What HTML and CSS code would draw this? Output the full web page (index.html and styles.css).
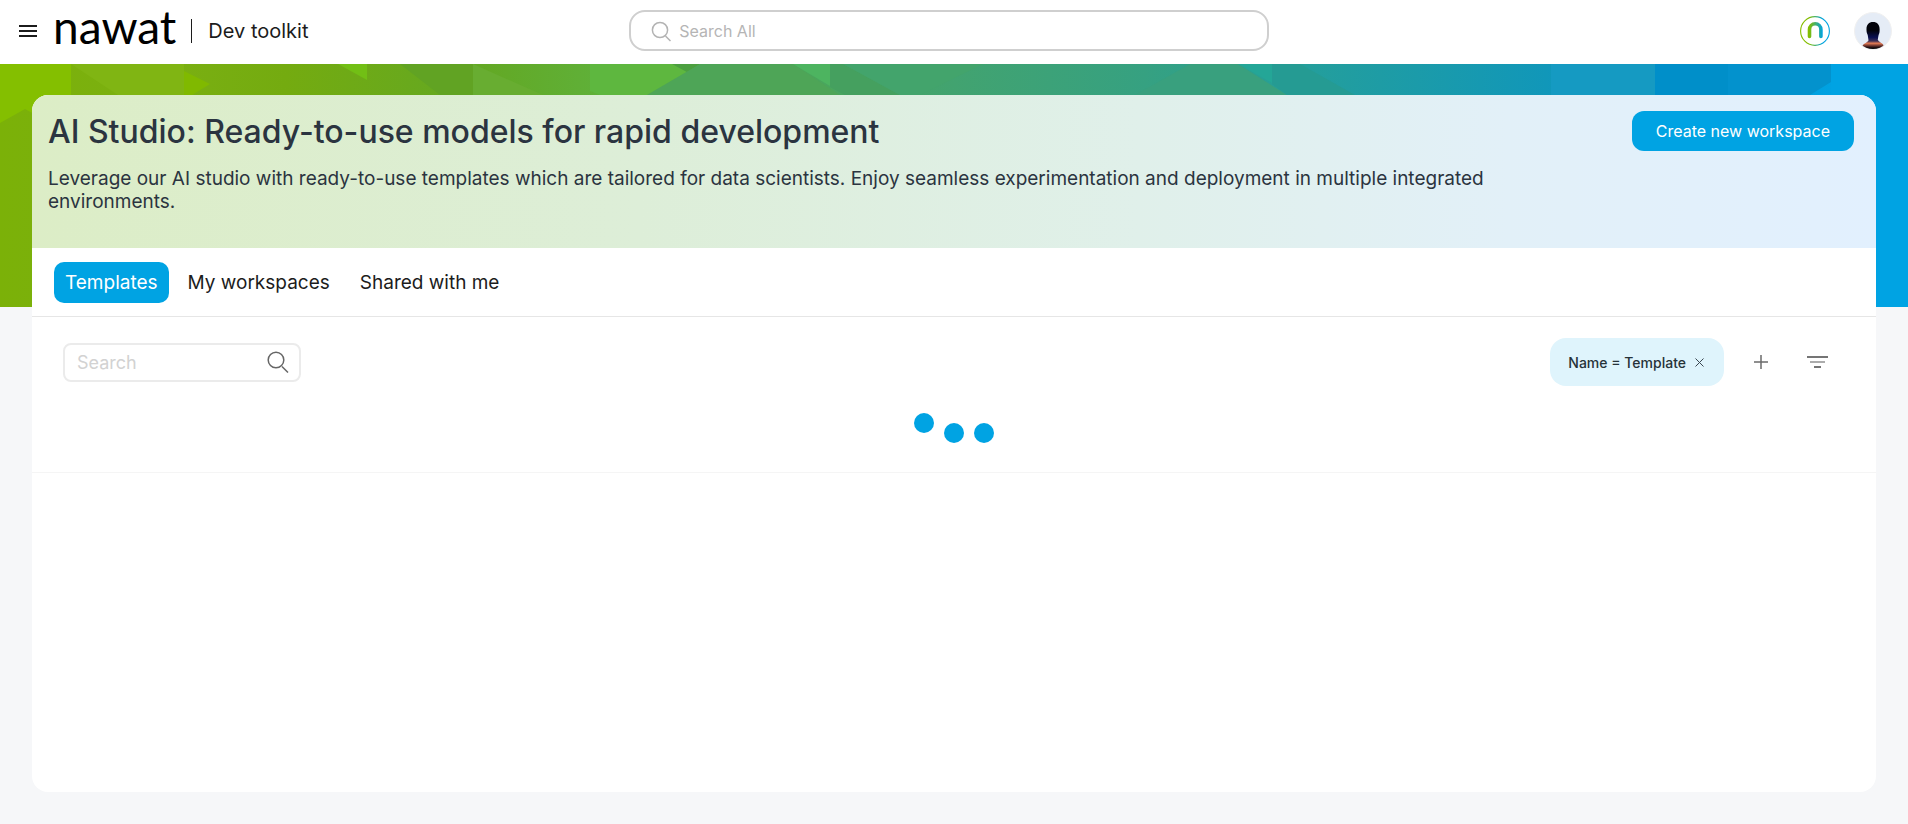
FILE: index.html
```html
<!DOCTYPE html>
<html lang="en">
<head>
<meta charset="utf-8">
<meta name="viewport" content="width=device-width, initial-scale=1">
<title>Dev toolkit</title>
<link rel="stylesheet" href="styles.css">
</head>
<body>
<header class="topbar">
  <div class="brand">
    <button class="icon-btn menu-btn" aria-label="Menu">
      <svg width="18" height="14" viewBox="0 0 18 14" fill="none" stroke="#1c1c1c" stroke-width="2"><path d="M0 2h18M0 7h18M0 12h18"/></svg>
    </button>
    <a class="logo" href="#">nawat</a>
    <span class="brand-divider"></span>
    <span class="product">Dev toolkit</span>
  </div>
  <label class="global-search">
    <svg width="22" height="22" viewBox="0 0 22 22" fill="none" stroke="#b3b3b3" stroke-width="1.5"><circle cx="9" cy="10" r="7.6"/><path d="M14.500 16l5 5"/></svg>
    <input type="text" placeholder="Search All" aria-label="Search All">
  </label>
  <div class="account">
    <button class="icon-btn" aria-label="Assistant">
      <svg width="30" height="30" viewBox="0 0 30 30" fill="none">
        <defs><linearGradient id="mark" x1="0" y1="0" x2="30" y2="0" gradientUnits="userSpaceOnUse"><stop offset=".3" stop-color="#84bd00"/><stop offset=".75" stop-color="#00a3e0"/></linearGradient></defs>
        <circle cx="15" cy="15" r="14.400" stroke="url(#mark)" stroke-width="1.100"/>
        <path d="M9.500 20.500V13.500a5.700 5.700 0 0 1 11.400 0V20.500" stroke="url(#mark)" stroke-width="3.600" stroke-linecap="round"/>
      </svg>
    </button>
    <button class="icon-btn" aria-label="Profile">
      <svg width="38" height="38" viewBox="0 0 38 38">
        <defs>
          <linearGradient id="head" x1="0" y1="10" x2="0" y2="38" gradientUnits="userSpaceOnUse"><stop offset=".3" stop-color="#02030a"/><stop offset=".55" stop-color="#0a1050"/><stop offset=".68" stop-color="#3c2f55"/><stop offset=".76" stop-color="#e47b55"/><stop offset=".86" stop-color="#5d2b27"/><stop offset=".93" stop-color="#080508"/></linearGradient>
          <clipPath id="round"><circle cx="19" cy="19" r="18"/></clipPath>
        </defs>
        <circle cx="19" cy="19" r="18.500" fill="#e5ecf6" stroke="#f0f0f0"/>
        <path clip-path="url(#round)" fill="url(#head)" d="M19 10c-4.500 0-6.800 3-6.500 8 0 2 .5 3.500 1.200 5 .3 2 .6 3.500.8 5.500-1 2-4.500 2.800-6 5V38h21v-5c-1.500-2.200-4.500-3-5.700-5 .2-2 .5-3.500.8-5 .8-1.500 1-3 1-5 .3-5-2.100-8-6.600-8z"/>
      </svg>
    </button>
  </div>
</header>
<main class="page">
  <svg class="backdrop" viewBox="0 0 1908 243" preserveAspectRatio="none" aria-hidden="true">
    <defs>
      <linearGradient id="band"><stop offset="0" stop-color="#7bb108"/><stop offset=".08" stop-color="#7bb012"/><stop offset=".15" stop-color="#74ab10"/><stop offset=".25" stop-color="#63a823"/><stop offset=".32" stop-color="#5fb13b"/><stop offset=".42" stop-color="#4ba65a"/><stop offset=".5" stop-color="#42a370"/><stop offset=".6" stop-color="#36a181"/><stop offset=".69" stop-color="#239e9d"/><stop offset=".81" stop-color="#1197b9"/><stop offset=".88" stop-color="#0296d0"/><stop offset=".96" stop-color="#00a2e2"/><stop offset="1" stop-color="#00a3e3"/></linearGradient>
    </defs>
    <path fill="url(#band)" d="M0 0h1908v243H0z"/>
    <path fill="#84bf00" d="M0 0H71V70L25 45 0 59z"/>
    <path fill="#80b513" d="M71 0H184V31H118z"/>
    <path fill="#80b900" d="M184 7L210 20 192 31H184z"/>
    <path fill="#72bf15" d="M338 0H367V16z"/>
    <path fill="#61a323" d="M400 0H473V31H440z"/>
    <path fill="#68ad31" d="M473 0L543 31H473z"/>
    <path fill="#5eb73f" d="M590 0H673L687 8 647 31H600L590 27z"/>
    <path fill="#4c9f40" d="M672 0H700L687 8z"/>
    <path fill="#4ea557" d="M700 0H793L840 31H647z"/>
    <path fill="#4db460" d="M793 0H830V22z"/>
    <path fill="#45a05f" d="M830 0H843L900 31H845L830 23z"/>
    <path fill="#43a46c" d="M843 0H983L920 31H900z"/>
    <path fill="#39a07e" d="M1190 0H1238L1287 31H1135z"/>
    <path fill="#24a697" d="M1238 0H1272V19z"/>
    <path fill="#259b93" d="M1272 0H1300L1355 31H1287L1272 20z"/>
    <path fill="#159ac2" d="M1551 0H1655V31H1551z"/>
    <path fill="#008fc9" d="M1655 0H1728V31H1655z"/>
    <path fill="#0392cd" d="M1728 0H1831V18L1810 31H1728z"/>
    <path fill="#00a3e3" d="M1831 0H1908V243H1831z"/>
  </svg>
  <section class="card">
    <div class="hero">
      <div class="hero-text">
        <h1>AI Studio: Ready-to-use models for rapid development</h1>
        <p>Leverage our AI studio with ready-to-use templates which are tailored for data scientists. Enjoy seamless experimentation and deployment in multiple integrated environments.</p>
      </div>
      <button class="primary">Create new workspace</button>
    </div>
    <nav class="tabs">
      <button class="tab active">Templates</button>
      <button class="tab">My workspaces</button>
      <button class="tab">Shared with me</button>
    </nav>
    <div class="results">
      <div class="toolbar">
        <label class="search">
          <input type="text" placeholder="Search" aria-label="Search">
          <svg width="22" height="22" viewBox="0 0 22 22" fill="none" stroke="#666" stroke-width="1.500"><circle cx="9" cy="9" r="7.800"/><path d="M15 15.500l6 6"/></svg>
        </label>
        <div class="filters">
          <span class="chip">Name = Template
            <button class="icon-btn" aria-label="Remove filter"><svg width="9" height="9" viewBox="0 0 9 9" stroke="#3a4650" stroke-width="1"><path d="M.5.500l8 8M8.500.500l-8 8"/></svg></button>
          </span>
          <button class="icon-btn" aria-label="Add filter"><svg width="14" height="14" viewBox="0 0 14 14" stroke="#6b6b6b" stroke-width="1.500"><path d="M0 7h14M7 0v14"/></svg></button>
          <button class="icon-btn" aria-label="Filter list"><svg width="21" height="12" viewBox="0 0 21 12" stroke="#757575"><path stroke-width="2" d="M0 1h21"/><path stroke-width="1.200" d="M3 6h15"/><path stroke-width="2" d="M7 11h7"/></svg></button>
        </div>
      </div>
      <div class="loader" role="status" aria-label="Loading"><i class="dot raised"></i><i class="dot"></i><i class="dot"></i></div>
    </div>
  </section>
</main>
</body>
</html>
```
FILE: styles.css
```css
* { box-sizing: border-box; }
body {
  margin: 0;
  min-height: 100vh;
  display: flex;
  flex-direction: column;
  background: #f6f7f9;
  color: #1c1c1c;
  font-family: Inter, "Open Sans", sans-serif;
}
button, input { font: inherit; color: inherit; }
button { border: 0; cursor: pointer; }
svg { display: block; flex: none; }
.icon-btn { padding: 0; background: none; display: flex; }

.topbar {
  height: 64px;
  display: grid;
  grid-template-columns: 49fr 640px 50fr;
  align-items: center;
  padding: 0 16px 3px 19px;
  background: #fff;
}
.brand { display: flex; align-items: center; }
.logo {
  margin: 0 15px 0 16px;
  font-family: Lato, sans-serif;
  font-size: 46px;
  line-height: 40px;
  padding-bottom: 8px;
  color: #000;
  text-decoration: none;
}
.brand-divider { width: 1px; height: 24px; background: #1c1c1c; }
.product { margin-left: 16px; font-size: 20px; }
.global-search {
  height: 41px;
  display: flex;
  align-items: center;
  gap: 6px;
  padding: 0 20px;
  border: 2px solid #cfcfcf;
  border-radius: 16px;
}
.global-search input, .search input {
  flex: 1;
  min-width: 0;
  padding: 0;
  border: 0;
  outline: 0;
  background: none;
}
.global-search input { font-size: 16px; }
.global-search input::placeholder { color: #b5b5b5; }
.account { display: flex; align-items: center; justify-content: flex-end; gap: 24px; }

.page {
  position: relative;
  flex: 1;
  display: flex;
  padding: 31px 32px 32px;
}
.backdrop {
  position: absolute;
  top: 0;
  left: 0;
  width: 100%;
  height: 243px;
}
.card {
  position: relative;
  flex: 1;
  min-width: 0;
  background: #fff;
  border-radius: 16px;
  overflow: hidden;
}
.hero {
  display: flex;
  justify-content: space-between;
  align-items: flex-start;
  padding: 16px 22px 35px 16px;
  background: linear-gradient(90deg, #dcedc6, #ddeed8 33%, #e0f0ea 60%, #e2f0f8 80%, #e2f0fe);
  color: #2b3440;
}
.hero-text { width: 82%; }
h1 { margin: 0; font-size: 32px; line-height: 42px; font-weight: 500; }
.hero p { margin: 14px 0 0; font-size: 19px; line-height: 23px; }
.primary {
  height: 40px;
  padding: 0 24px;
  border-radius: 12px;
  background: #00a3e3;
  color: #fff;
  font-size: 16px;
}
.tabs {
  display: flex;
  gap: 8px;
  padding: 14px 22px 13px;
  border-bottom: 1px solid #e6e6e6;
}
.tab {
  height: 41px;
  padding: 0 11px;
  border-radius: 10px;
  background: none;
  font-size: 19px;
}
.tab.active { background: #00a3e3; color: #fff; }
.results { border-bottom: 1px solid #f5f5f5; }
.toolbar {
  display: flex;
  justify-content: space-between;
  align-items: center;
  padding: 21px 48px 0 31px;
}
.search {
  width: 238px;
  height: 39px;
  display: flex;
  align-items: center;
  padding: 0 10px 0 12px;
  border: 2px solid #ebebeb;
  border-radius: 8px;
}
.search input { font-size: 18px; }
.search input::placeholder { color: #d2d2d2; }
.filters { display: flex; align-items: center; gap: 30px; }
.filters > .icon-btn { padding: 8px 0; }
.filters > .icon-btn + .icon-btn { margin-left: 9px; }
.chip {
  height: 48px;
  display: flex;
  align-items: center;
  gap: 9px;
  padding: 0 20px 0 18px;
  border-radius: 16px;
  background: #dff4fc;
  color: #263238;
  font-size: 14px;
  font-weight: 500;
}
.loader {
  height: 86px;
  display: flex;
  justify-content: center;
  align-items: flex-start;
  gap: 10px;
  padding-top: 27px;
}
.dot { width: 20px; height: 20px; margin-top: 10px; border-radius: 50%; background: #00a3e3; }
.dot.raised { margin-top: 0; }
```
